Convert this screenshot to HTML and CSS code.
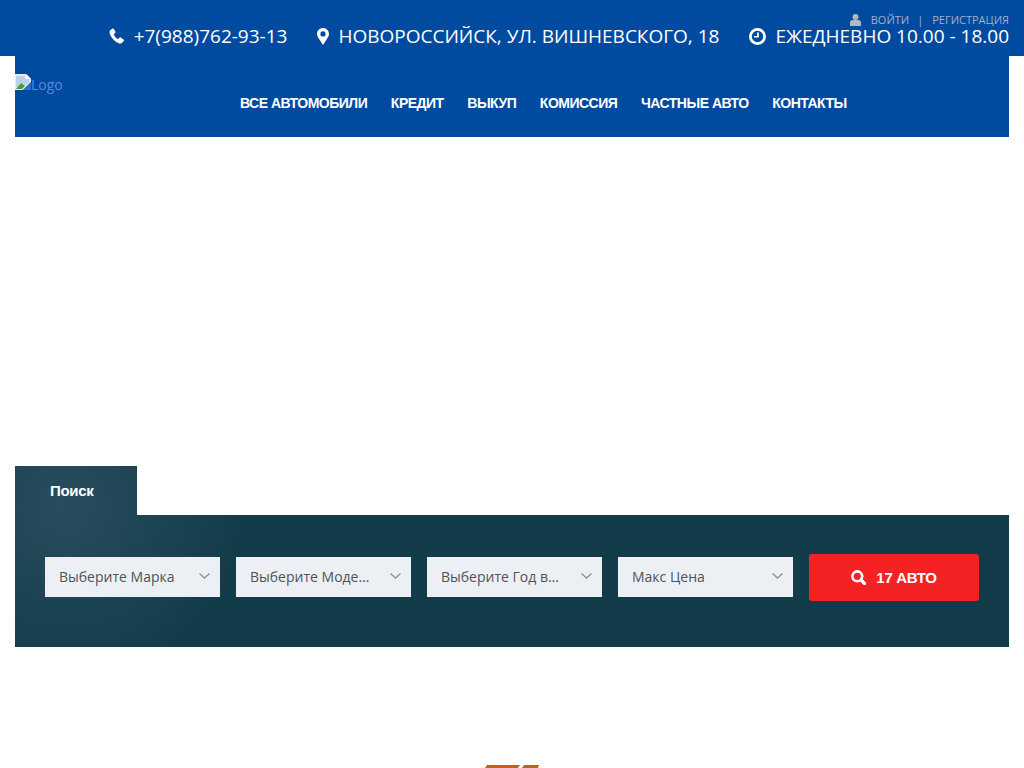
FILE: index.html
```html
<!DOCTYPE html>
<html lang="ru">
<head>
    <meta charset="UTF-8">
    <title>Автосалон</title>
    <link rel="stylesheet" href="styles.css">
</head>
<body>
    <div class="topbar">
        <div class="login">
            <svg class="login-icon" width="11" height="12" viewBox="0 0 11 12"><circle cx="5.5" cy="3" r="3"/><path d="M0 12V8.5C0 7 1.2 6 2.5 6h6C9.8 6 11 7 11 8.500V12z"/></svg>
            <a href="#">ВОЙТИ</a>
            <span class="sep">|</span>
            <a href="#">РЕГИСТРАЦИЯ</a>
        </div>
        <div class="contacts">
            <div class="contact">
                <svg width="16" height="16" viewBox="0 0 16 16"><path d="M3.700.6 1.500 1.900C.4 2.800.3 4.300.9 6c1.500 4 5 7.800 8.700 9.200 1.500.500 2.700.4 3.600-.4l1.700-2c.3-.4.2-.8-.1-1.100l-3-2.300c-.4-.2-.8-.2-1.100.1l-1.300 1.300c-.2.200-.5.200-.7.100-1.600-.9-3-2.500-3.800-4.200-.1-.2-.1-.5.100-.7l1.300-1.200c.3-.3.4-.7.200-1.100L4.800.9C4.500.500 4.100.4 3.700.6z"/></svg>
                <span>+7(988)762-93-13</span>
            </div>
            <div class="contact">
                <svg width="12" height="17" viewBox="0 0 12 17"><path fill-rule="evenodd" d="M6 0C2.700 0 0 2.600 0 5.900c0 1.300.4 2.200 1 3.300L6 17l5-7.800c.6-1.100 1-2 1-3.300C12 2.600 9.300 0 6 0zm0 8.500a2.600 2.600 0 1 1 0-5.200 2.600 2.600 0 0 1 0 5.200z"/></svg>
                <span>НОВОРОССИЙСК, УЛ. ВИШНЕВСКОГО, 18</span>
            </div>
            <div class="contact">
                <svg width="17" height="17" viewBox="0 0 17 17"><path fill-rule="evenodd" d="M8.500 0a8.500 8.500 0 1 0 0 17 8.500 8.500 0 0 0 0-17zm0 2.800a5.700 5.700 0 1 1 0 11.400 5.700 5.700 0 0 1 0-11.400z"/><path d="M8 4.500h1.800v5H5V8h3z"/></svg>
                <span>ЕЖЕДНЕВНО 10.00 - 18.00</span>
            </div>
        </div>
    </div>

    <div class="header">
        <a class="logo" href="#">
            <svg width="16" height="16" viewBox="0 0 16 16"><path d="M0 0h11l5 5v3L8 16H0z" fill="#e4ebf3"/><path d="M1 2h9v3h4v3l-6 5-7 0z" fill="#bcd0ee"/><path d="M1 15l5-6 4 3-3 3z" fill="#4c9a3c"/><path d="M11 0l5 5h-5z" fill="#fff"/><path d="M16 8v8H8z" fill="#2f6fc4"/></svg><span>Logo</span>
        </a>
        <ul class="nav">
            <li><a href="#">ВСЕ АВТОМОБИЛИ</a></li>
            <li><a href="#">КРЕДИТ</a></li>
            <li><a href="#">ВЫКУП</a></li>
            <li><a href="#">КОМИССИЯ</a></li>
            <li><a href="#">ЧАСТНЫЕ АВТО</a></li>
            <li><a href="#">КОНТАКТЫ</a></li>
        </ul>
    </div>

    <div class="hero"></div>

    <div class="search">
        <div class="tab">Поиск</div>
        <div class="panel">
            <div class="field"><span>Выберите Марка</span><svg width="11" height="6" viewBox="0 0 11 6"><path d="M.5.5 5.500 5 10.500.5" fill="none" stroke="#8a949c" stroke-width="1.400"/></svg></div>
            <div class="field"><span>Выберите Модель</span><svg width="11" height="6" viewBox="0 0 11 6"><path d="M.5.5 5.500 5 10.500.5" fill="none" stroke="#8a949c" stroke-width="1.400"/></svg></div>
            <div class="field"><span>Выберите Год выпуска</span><svg width="11" height="6" viewBox="0 0 11 6"><path d="M.5.5 5.500 5 10.500.5" fill="none" stroke="#8a949c" stroke-width="1.400"/></svg></div>
            <div class="field"><span>Макс Цена</span><svg width="11" height="6" viewBox="0 0 11 6"><path d="M.5.5 5.500 5 10.500.5" fill="none" stroke="#8a949c" stroke-width="1.400"/></svg></div>
            <button class="btn">
                <svg width="15" height="15" viewBox="0 0 15 15"><circle cx="6.300" cy="6.300" r="4.900" fill="none" stroke="#fff" stroke-width="2.600"/><path d="M10 10 13.500 13.500" stroke="#fff" stroke-width="3.200" stroke-linecap="round"/></svg>
                <span>17 АВТО</span>
            </button>
        </div>
    </div>

    <div class="brand">
        <svg width="54" height="3" viewBox="0 0 54 3"><path d="M2 0h33l-2 3H0zM39 0h15l-1 3H37z" fill="#c4601a"/></svg>
    </div>
</body>
</html>
```

FILE: styles.css
```css
*{
    margin: 0;
    padding: 0;
    box-sizing: border-box;
}
html,body{
    height: 768px;
    overflow: hidden;
}
body{
    background: #fff;
    font-family: "Open Sans", "Liberation Sans", sans-serif;
}
a{
    text-decoration: none;
    color: inherit;
}
.topbar{
    position: relative;
    height: 56px;
    padding: 0 15px;
    background: #004aa0;
    color: #fff;
}
.contacts{
    display: flex;
    justify-content: flex-end;
    gap: 30px;
    padding-top: 26px;
}
.contact{
    display: flex;
    align-items: center;
    gap: 9px;
    font-size: 19px;
    line-height: 20px;
    white-space: nowrap;
}
.contact svg{
    fill: #fff;
    flex: none;
}
.login{
    position: absolute;
    top: 13px;
    right: 15px;
    display: flex;
    align-items: center;
    font-size: 11px;
    line-height: 13px;
    color: #a3b1c6;
}
.login-icon{
    fill: #b4b9bf;
    margin-right: 10px;
}
.sep{
    margin: 0 9px 0 8px;
}
.header{
    display: flex;
    height: 81px;
    margin: 0 15px;
    background: #004aa0;
}
.logo{
    display: flex;
    align-items: flex-start;
    width: 225px;
    padding-top: 18px;
    font-size: 14px;
    line-height: 22px;
    color: #4f8ce2;
}
.logo svg{
    flex: none;
}
.nav{
    display: flex;
    gap: 23.6px;
    list-style: none;
    padding-top: 35px;
}
.nav a{
    font-family: "Liberation Sans", Arial, sans-serif;
    font-size: 14px;
    line-height: 20px;
    font-weight: bold;
    letter-spacing: -0.5px;
    color: #fff;
    white-space: nowrap;
}
.hero{
    height: 329px;
}
.search{
    margin: 0 15px;
}
.tab{
    width: 122px;
    height: 49px;
    padding: 15px 0 0 35px;
    background: #133c4b radial-gradient(circle at 50px 40px, #294d5e 0, #133c4b 175px) no-repeat;
    font-family: "Liberation Sans", Arial, sans-serif;
    font-size: 15px;
    line-height: 20px;
    font-weight: bold;
    letter-spacing: -0.3px;
    color: #fff;
}
.panel{
    display: flex;
    align-items: center;
    gap: 16px;
    height: 132px;
    padding: 0 30px 8px;
    background: #133c4b radial-gradient(circle at 50px -9px, #294d5e 0, #133c4b 175px) no-repeat;
}
.field{
    display: flex;
    align-items: center;
    justify-content: space-between;
    width: 175px;
    height: 40px;
    padding: 0 10px 2px 14px;
    background: #ecf0f4;
    font-size: 14px;
    color: #4e5358;
}
.field span{
    width: 120px;
    overflow: hidden;
    text-overflow: ellipsis;
    white-space: nowrap;
}
.btn{
    display: flex;
    align-items: center;
    justify-content: center;
    gap: 10px;
    width: 170px;
    height: 47px;
    border: 0;
    border-radius: 3px;
    background: #f42222;
    color: #fff;
    font-family: "Liberation Sans", Arial, sans-serif;
    font-size: 15px;
    letter-spacing: -0.3px;
    font-weight: bold;
}
.brand{
    display: flex;
    justify-content: center;
    padding-top: 118px;
}
```
